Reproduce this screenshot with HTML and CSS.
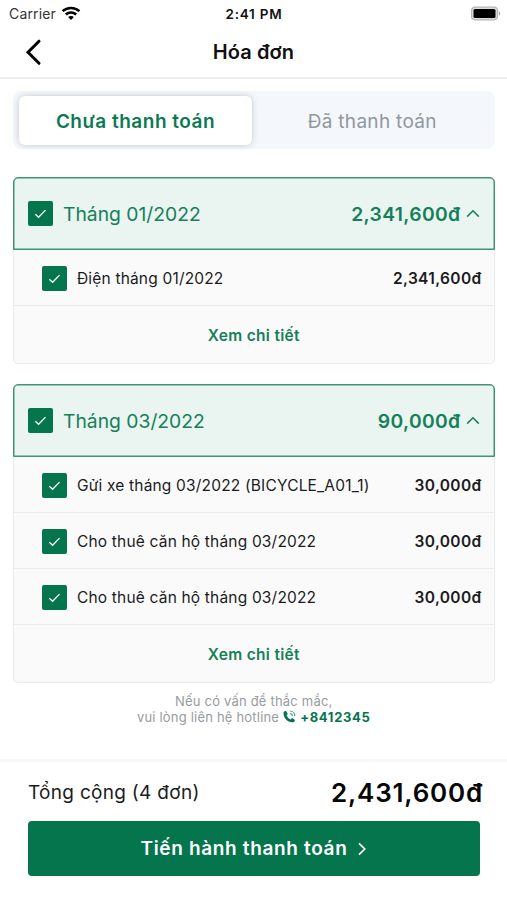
FILE: index.html
```html
<!DOCTYPE html>
<html lang="vi">
<head>
<meta charset="utf-8">
<title>Hóa đơn</title>
<link rel="stylesheet" href="styles.css">
</head>
<body>
<svg class="defs" width="0" height="0">
  <symbol id="check" viewBox="0 0 25 25"><path d="M7.3 13.2l3.3 3.1 6.9-7.2" fill="none" stroke="#fff" stroke-width="1.3"/></symbol>
  <symbol id="up" viewBox="0 0 14 9"><path d="M1.2 7.6L7 1.8l5.8 5.8" fill="none" stroke="currentColor" stroke-width="1.5"/></symbol>
</svg>
<div class="status">
  <div class="carrier"><span>Carrier</span>
    <svg width="20" height="15" viewBox="0 0 20 15" fill="none" stroke="#000" stroke-width="2.5"><path d="M1.6 5.2C6.3.8 13.7.8 18.4 5.2"/><path d="M4.8 8.5c3-2.8 7.4-2.8 10.4 0"/><path d="M10 14l-2.9-3c1.6-1.5 4.2-1.5 5.800 0z" fill="#000" stroke="none"/></svg>
  </div>
  <div class="time">2:41 PM</div>
  <svg class="battery" width="32" height="16" viewBox="0 0 32 16"><rect x="2.500" y="1.200" width="26" height="12.600" rx="3.500" fill="#ddd" stroke="#b5b5b5" stroke-width="1.200"/><rect x="4.500" y="3" width="22" height="9" rx="1.500"/><path d="M29.800 5.300c2 .8 2 3.600 0 4.400z" fill="#aaa"/></svg>
</div>
<header class="nav">
  <svg class="back" width="18" height="28" viewBox="0 0 18 28"><path d="M15 3.200L4 14.300l11 11" fill="none" stroke="#000" stroke-width="3" stroke-linecap="round" stroke-linejoin="miter"/></svg>
  <h1>Hóa đơn</h1>
</header>
<main>
  <div class="tabs"><div class="tab active"><span>Chưa thanh toán</span></div><div class="tab"><span>Đã thanh toán</span></div></div>
  <section class="card">
    <div class="head"><svg class="box"><use href="#check"/></svg><span class="month">Tháng 01/2022</span><span class="sum">2,341,600đ</span><svg class="up"><use href="#up"/></svg></div>
    <div class="row"><svg class="box"><use href="#check"/></svg><span class="label">Điện tháng 01/2022</span><b>2,341,600đ</b></div>
    <div class="more"><span>Xem chi tiết</span></div>
  </section>
  <section class="card">
    <div class="head"><svg class="box"><use href="#check"/></svg><span class="month">Tháng 03/2022</span><span class="sum">90,000đ</span><svg class="up"><use href="#up"/></svg></div>
    <div class="row"><svg class="box"><use href="#check"/></svg><span class="label">Gửi xe tháng 03/2022 (BICYCLE_A01_1)</span><b>30,000đ</b></div>
    <div class="row"><svg class="box"><use href="#check"/></svg><span class="label">Cho thuê căn hộ tháng 03/2022</span><b>30,000đ</b></div>
    <div class="row"><svg class="box"><use href="#check"/></svg><span class="label">Cho thuê căn hộ tháng 03/2022</span><b>30,000đ</b></div>
    <div class="more"><span>Xem chi tiết</span></div>
  </section>
  <div class="help">
    <div>Nếu có vấn đề thắc mắc,</div>
    <div class="hotline"><span>vui lòng liên hệ hotline</span>
      <svg width="13" height="13" viewBox="0 0 13 13"><path d="M.7 1.700L3 .7l1.800 3.200-1.300 1.300c.8 1.900 2.200 3.300 4.100 4.200l1.400-1.300 3 1.800-.8 2.100C5.500 13.800-.5 7.800.7 1.700z" fill="#04754d"/><path d="M6.800 3.500c1.500 0 2.500 1 2.500 2.600M6.800 1c2.800 0 5 2.200 5 5" fill="none" stroke="#4f9f82" stroke-width="1.200"/></svg>
      <b>+8412345</b></div>
  </div>
</main>
<footer>
  <div class="total"><span>Tổng cộng (4 đơn)</span><strong>2,431,600đ</strong></div>
  <div class="pay"><span>Tiến hành thanh toán</span><svg width="10" height="14" viewBox="0 0 10 14"><path d="M2 1.300L7.800 7 2 12.700" fill="none" stroke="#fff" stroke-width="1.700"/></svg></div>
</footer>
</body>
</html>
```
FILE: styles.css
```css
* { box-sizing: border-box; }
body { margin: 0; width: 507px; height: 900px; overflow: hidden; background: #fff; color: #1b1b1d; font-family: Inter, "Noto Sans", sans-serif; display: flex; flex-direction: column; }
.defs { display: none; }
svg { flex: none; display: block; }
span, b, strong { white-space: nowrap; }
.status { height: 27px; display: grid; grid-template-columns: 1fr auto 1fr; align-items: center; padding: 0 6px 0 9px; font-size: 14px; }
.carrier { display: flex; align-items: center; gap: 5px; color: #333; letter-spacing: .15px; }
.carrier svg { margin-top: -1px; }
.time { font-weight: 600; font-size: 13.5px; letter-spacing: .8px; color: #111; margin-right: 2px; }
.battery { justify-self: end; }
.nav { height: 52px; display: grid; grid-template-columns: 44px 1fr 44px; align-items: center; border-bottom: 2px solid #eee; }
.back { margin-left: 24px; }
.nav h1 { margin: 0; font-size: 20px; font-weight: 600; text-align: center; color: #111; line-height: 24px; letter-spacing: .1px; }
main { flex: 1; padding: 12px 12.5px 0 13px; }
.tabs { height: 58px; background: #f4f7fb; border-radius: 8px; display: grid; grid-template-columns: 233px 1fr; padding: 5px 0 4px 6px; margin-bottom: 28px; }
.tab { display: flex; align-items: center; justify-content: center; font-size: 19px; color: #8f979e; letter-spacing: .3px; padding: 1px 2px 0 0; }
.active { background: #fff; border-radius: 6px; box-shadow: 0 0 6px rgba(0,0,0,.2); color: #0b7a53; font-weight: 600; letter-spacing: .5px; padding-right: 0; }
.card { border: 1px solid #e9ecec; border-radius: 5px; background: #fafafa; margin-bottom: 20px; }
.head { margin: -1px -1px 0; height: 73px; border: 1px solid #3f9475; box-shadow: inset 0 0 0 .5px #3f9475; border-radius: 5px 5px 0 0; background: #eaf4f0; color: #148059; display: flex; align-items: center; padding: 0 14px; font-size: 19.3px; }
.box { width: 25px; height: 25px; border-radius: 2px; background: #04754d; }
.month { margin-left: 10px; flex: 1; }
.sum { font-weight: 600; letter-spacing: .35px; }
.up { width: 14px; height: 9px; margin-left: 5px; }
.row { height: 56px; border-bottom: 1px solid #e8ebeb; display: flex; align-items: center; padding: 1px 12px 0 28px; font-size: 15.5px; }
.label { margin-left: 10px; flex: 1; letter-spacing: .18px; }
.row b { font-weight: 600; letter-spacing: .35px; }
.more { height: 57px; padding-top: 1px; display: flex; align-items: center; justify-content: center; color: #148059; font-weight: 600; font-size: 15.5px; letter-spacing: .3px; }
.help { margin-top: -10px; font-size: 13px; line-height: 16px; text-align: center; color: #979b9f; letter-spacing: .2px; }
.hotline { display: flex; justify-content: center; align-items: center; gap: 4px; }
.hotline b { color: #04754d; font-weight: 700; letter-spacing: .7px; }
.hotline svg { margin-top: -2px; }
footer { height: 141px; border-top: 3px solid #f8f8f8; padding: 7px 27px 0 28px; }
.total { height: 52px; padding-bottom: 6px; display: flex; align-items: center; justify-content: space-between; margin-right: -3px; font-size: 19px; letter-spacing: .3px; }
.total strong { font-size: 26px; font-weight: 600; color: #060606; letter-spacing: .8px; }
.pay { height: 55px; border-radius: 4px; background: #04754d; color: #fff; font-size: 19px; font-weight: 600; letter-spacing: .65px; display: flex; align-items: center; justify-content: center; gap: 10px; }
```
